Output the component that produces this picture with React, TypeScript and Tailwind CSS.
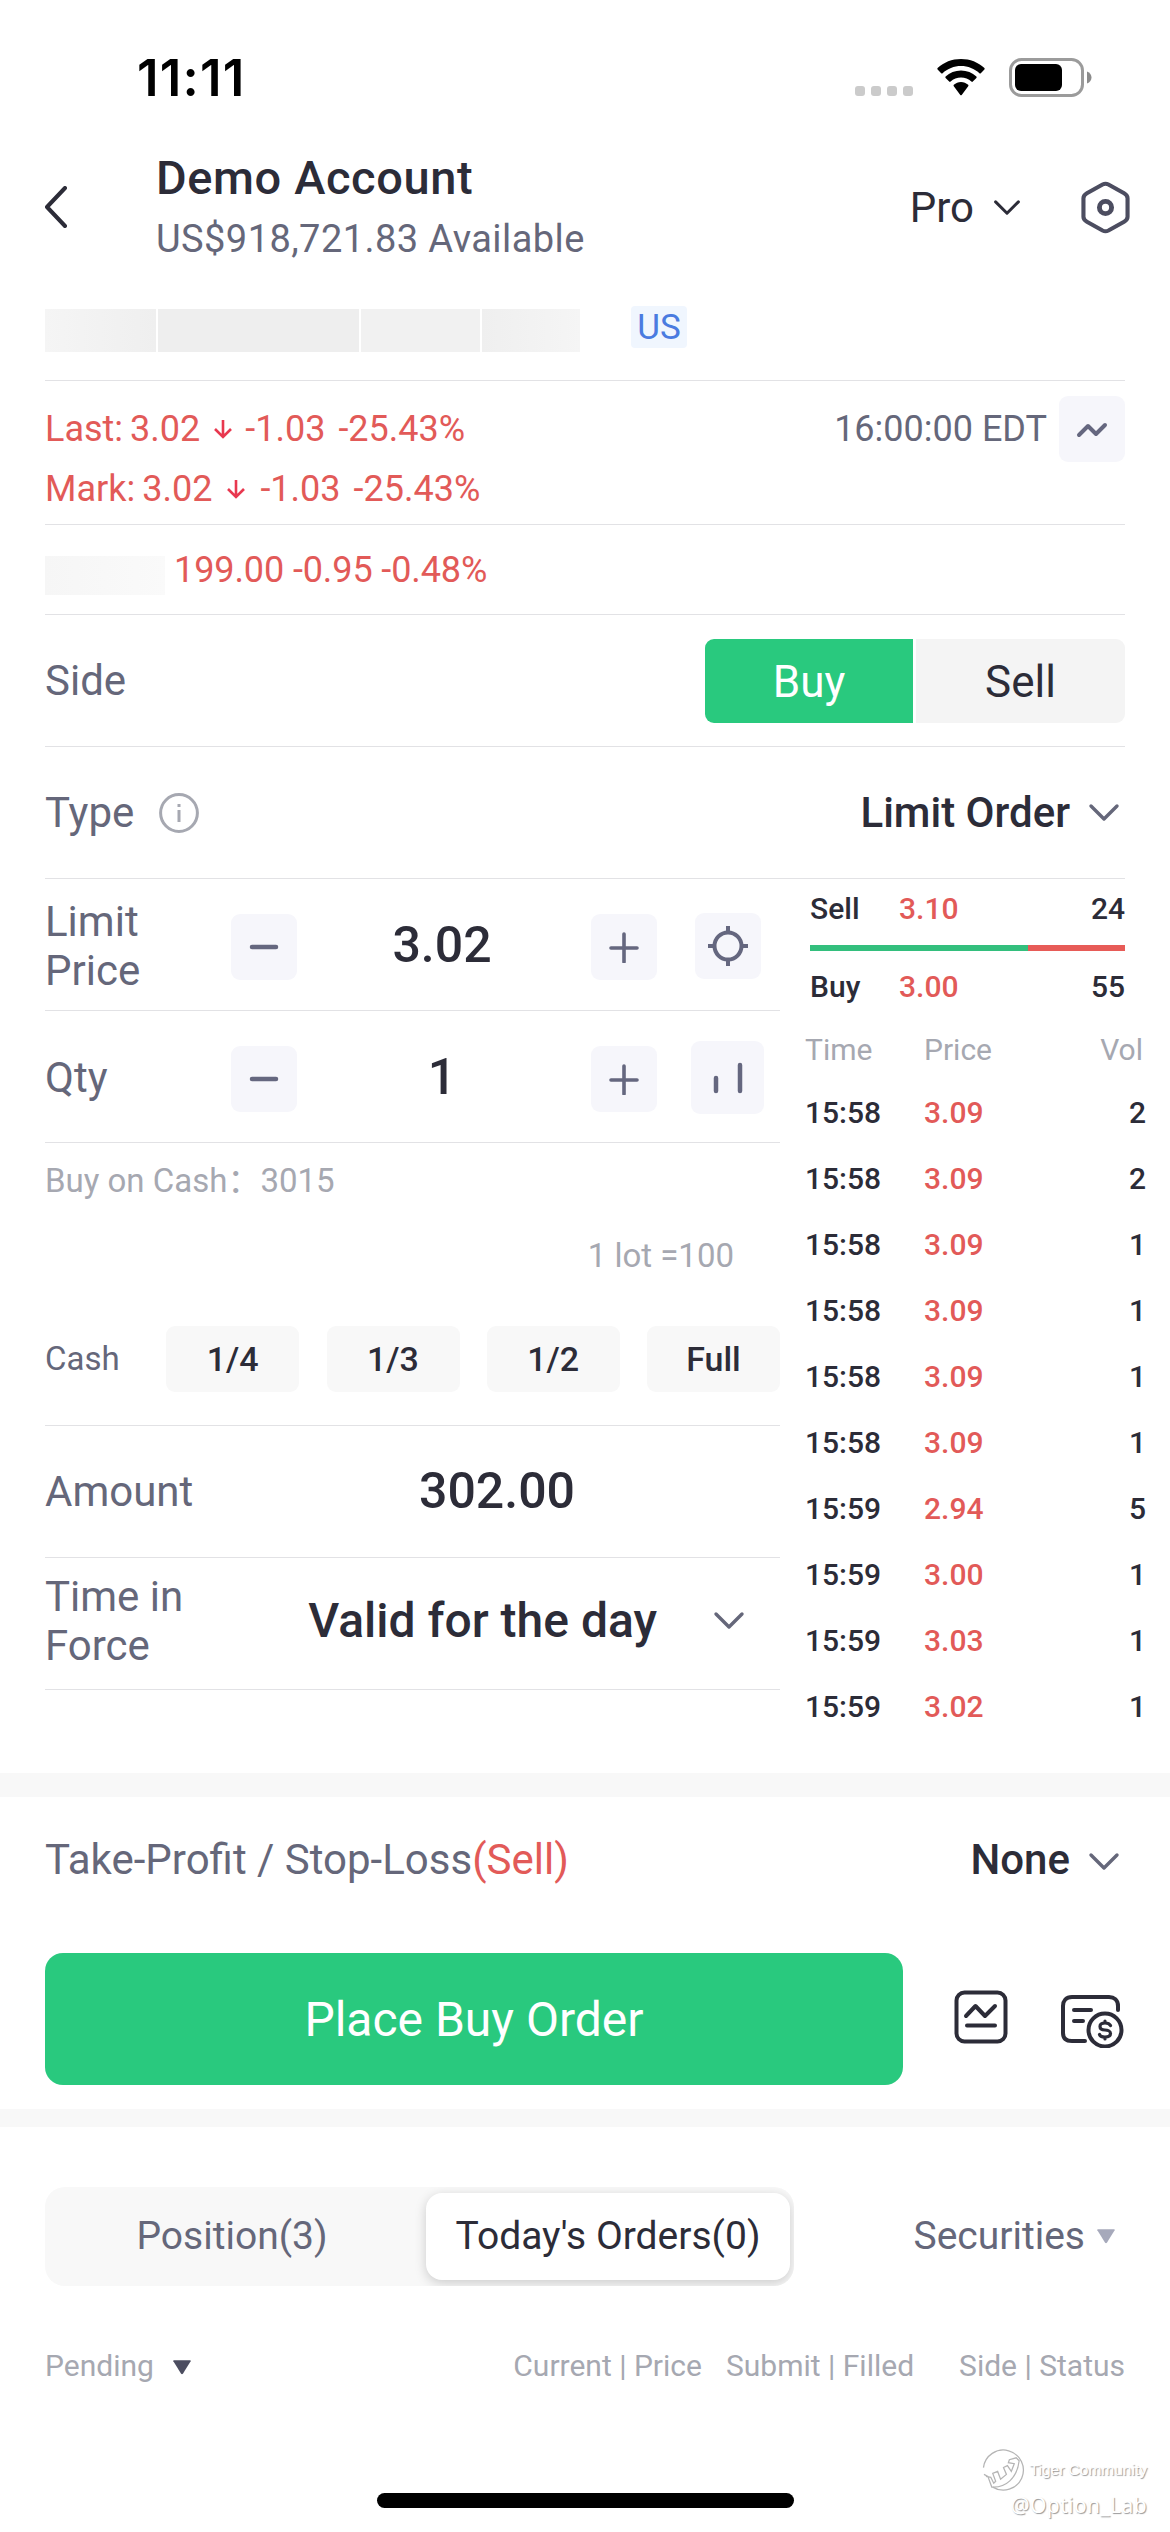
import * as React from 'react'

const TRADES = [
  { time: '15:58', price: '3.09', vol: 2 },
  { time: '15:58', price: '3.09', vol: 2 },
  { time: '15:58', price: '3.09', vol: 1 },
  { time: '15:58', price: '3.09', vol: 1 },
  { time: '15:58', price: '3.09', vol: 1 },
  { time: '15:58', price: '3.09', vol: 1 },
  { time: '15:59', price: '2.94', vol: 5 },
  { time: '15:59', price: '3.00', vol: 1 },
  { time: '15:59', price: '3.03', vol: 1 },
  { time: '15:59', price: '3.02', vol: 1 },
]

const FRACTIONS = ['1/4', '1/3', '1/2', 'Full']

function Chevron({ className = 'w-8' }: { className?: string }) {
  return (
    <svg viewBox="0 0 32 20" className={`h-5 shrink-0 ${className}`} fill="none" stroke="currentColor" strokeWidth="3.4" strokeLinecap="round" strokeLinejoin="round">
      <path d="M3 3l13 13L29 3" />
    </svg>
  )
}

function Triangle({ className = '' }: { className?: string }) {
  return (
    <svg viewBox="0 0 20 16" className={`w-[18px] h-[15px] ${className}`} fill="currentColor">
      <path d="M1 0h18q1 0 .6 1l-8.6 14q-1 1-2 0L.4 1Q0 0 1 0z" />
    </svg>
  )
}

function DownArrow() {
  return (
    <svg viewBox="0 0 20 20" className="w-5 h-5 shrink-0" fill="none" stroke="#e8384f" strokeWidth="2.6">
      <path d="M10 1v17M2 10l8 8 8-8" />
    </svg>
  )
}

function StatusBar() {
  return (
    <div className="h-[156px] pl-[137px] pr-[78px] flex justify-between text-black">
      <div className="mt-[48px] h-[60px] leading-[60px] font-['Inter'] font-semibold text-[51px] tracking-[1.2px]">11:11</div>
      <div className="mt-[56px] flex h-[44px]">
        <div className="flex gap-1.5 mt-[30px] mr-[22px]">
          {[0, 1, 2, 3].map((i) => (
            <span key={i} className="w-[10px] h-[10px] rounded-[3px] bg-[#cbcbcb]" />
          ))}
        </div>
        <svg viewBox="0 0 52 38" className="w-[52px] h-[38px] mt-[2px] mr-[21px]">
          <path d="M26 8c7 0 13.500 2.700 18.400 7.200.4.400 1 .4 1.400 0l3.600-3.600c.4-.4.4-1.100 0-1.500C43.300 4.200 35 1 26 1S8.700 4.200 2.600 10.100c-.4.4-.4 1.100 0 1.500l3.600 3.600c.4.400 1 .4 1.400 0C12.500 10.700 19 8 26 8z" />
          <path d="M26 19.600c3.900 0 7.600 1.500 10.400 4 .4.400 1 .4 1.400 0l3.600-3.600c.4-.4.4-1.100 0-1.500C37.300 14.800 31.900 12.500 26 12.500s-11.300 2.300-15.400 6c-.4.4-.4 1.100 0 1.500l3.600 3.600c.4.400 1 .4 1.400 0 2.800-2.500 6.500-4 10.400-4z" />
          <path d="M33.200 28.300c.4-.4.4-1.100 0-1.500C31.200 25.100 28.700 24 26 24s-5.200 1.100-7.200 2.800c-.4.4-.4 1.100 0 1.500l6.500 8.700c.4.400 1 .4 1.400 0z" />
        </svg>
        <svg viewBox="0 0 84 40" className="w-[84px] h-[40px] mt-[2px]" fill="none">
          <rect x="2.500" y="1.500" width="72" height="36" rx="11" stroke="#9b9b9b" strokeWidth="3" />
          <rect x="7" y="6" width="47" height="27" rx="6" fill="#000" />
          <path d="M79 13.500c3 1 4.500 3.500 4.500 6s-1.500 5-4.500 6z" fill="#8b8b8b" />
        </svg>
      </div>
    </div>
  )
}

function Header() {
  return (
    <div className="h-[120px] pl-[44px] pr-[40px] pb-[18px] flex items-center text-[#2c2c38]">
      <svg viewBox="0 0 24 42" className="w-6 h-[42px]" fill="none" stroke="currentColor" strokeWidth="4" strokeLinecap="round" strokeLinejoin="round">
        <path d="M21 2L3 21l18 19" />
      </svg>
      <div className="ml-[88px] self-start flex-1">
        <h1 className="text-[47px] leading-[54px] mt-[-5px] font-medium tracking-[0.6px]">Demo Account</h1>
        <p className="text-[38px] leading-[46px] mt-[11px] text-[#65677a] tracking-[0.43px]">US$918,721.83 Available</p>
      </div>
      <span className="text-[42px]">Pro</span>
      <Chevron className="ml-[19px] mt-[2px] w-[28px]" />
      <svg viewBox="0 0 50 54" className="ml-[60px] w-[49px] h-[53px] shrink-0" fill="none" stroke="#4c4d60" strokeWidth="4.2">
        <path d="M22 3.500q3-1.500 6 0l16 9q3.500 2 3.500 5v19q0 3-3.500 5l-16 9q-3 1.500-6 0L6 41.500q-3.500-2-3.500-5v-19q0-3 3.500-5z" />
        <circle cx="25" cy="27" r="6.200" strokeWidth="5" />
      </svg>
    </div>
  )
}

function Quote({ label, arrow }: { label: string; arrow: string }) {
  return (
    <div className="flex items-center text-[36px] leading-[60px] text-[#e25a58]">
      <span className="mr-[7px]">{label}</span>
      <span>3.02</span>
      <span className={`flex justify-center ${arrow}`}><DownArrow /></span>
      <span>-1.03</span>
      <span className="ml-[13px]">-25.43%</span>
    </div>
  )
}

function IconButton({ children, className = 'w-[66px] h-[66px]' }: { children: React.ReactNode; className?: string }) {
  return <button className={`shrink-0 rounded-[9px] bg-[#f6f6fb] flex items-center justify-center text-[#65677f] ${className}`}>{children}</button>
}

function Minus() {
  return (
    <svg viewBox="0 0 30 30" className="w-[30px] h-[30px]" stroke="currentColor" strokeWidth="4.500" strokeLinecap="round">
      <path d="M3 15h24" />
    </svg>
  )
}

function Plus() {
  return (
    <svg viewBox="0 0 32 32" className="w-8 h-8" stroke="currentColor" strokeWidth="3.600" strokeLinecap="round">
      <path d="M3 17h26M16 3v28" />
    </svg>
  )
}

function Stepper({ label, value, children }: { label: React.ReactNode; value: string; children: React.ReactNode }) {
  return (
    <div className="h-[132px] pt-[2px] border-b border-[#e2e2e5] flex items-center">
      <div className="w-[186px] text-[42px] leading-[49px] text-[#65677a]">{label}</div>
      <IconButton className="w-[66px] h-[66px] mt-[3px]"><Minus /></IconButton>
      <div className="flex-1 pr-[4px] text-center text-[50px] font-medium text-[#2c2c38]">{value}</div>
      <IconButton className="w-[66px] h-[66px] mt-[3px]"><Plus /></IconButton>
      <div className="w-[73px] ml-[34px] mr-[16px] flex justify-center">{children}</div>
    </div>
  )
}

function OrderForm() {
  return (
    <div className="w-[735px]">
      <Stepper label={<>Limit<br />Price</>} value="3.02">
        <IconButton>
          <svg viewBox="0 0 40 40" className="w-10 h-10" fill="none" stroke="currentColor" strokeWidth="4">
            <circle cx="20" cy="20" r="13.500" />
            <path d="M20 0v7M20 33v7M0 20h7M33 20h7" />
          </svg>
        </IconButton>
      </Stepper>
      <Stepper label="Qty" value="1">
        <IconButton className="w-[73px] h-[73px]">
          <svg viewBox="0 0 32 34" className="w-8 h-[34px]" stroke="currentColor" strokeWidth="4.500" strokeLinecap="round">
            <path d="M4 17v13M28 4v26" />
          </svg>
        </IconButton>
      </Stepper>
      <div className="h-[283px] border-b border-[#e2e2e5] text-[33px] leading-[40px] text-[#a6a8b1]">
        <p className="pt-[15px]">Buy on Cash<span className="font-['Noto_Sans_CJK_SC']">：</span>3015</p>
        <p className="mt-[35px] pr-[46px] text-right">1 lot =100</p>
        <div className="mt-[50px] flex items-center justify-between">
          <span className="w-[94px] text-[#65677a]">Cash</span>
          {FRACTIONS.map((f) => (
            <button key={f} className="w-[133px] h-[66px] rounded-[9px] bg-[#f8f8f8] text-[34px] font-medium text-[#2c2c38]">{f}</button>
          ))}
        </div>
      </div>
      <div className="h-[132px] pb-px border-b border-[#e2e2e5] flex items-center">
        <span className="w-[300px] text-[42px] text-[#65677a]">Amount</span>
        <span className="w-[304px] text-center text-[50px] font-medium text-[#2c2c38]">302.00</span>
      </div>
      <div className="h-[132px] pb-[6px] border-b border-[#e2e2e5] flex items-center">
        <span className="w-[230px] text-[42px] leading-[49px] text-[#65677a]">Time in<br />Force</span>
        <span className="flex-1 text-right text-[48px] font-medium text-[#2c2c38]">Valid for the day</span>
        <Chevron className="w-8 ml-[56px] mr-[35px] text-[#65677a]" />
      </div>
    </div>
  )
}

function Book() {
  return (
    <div className="flex-1 text-[30px] font-medium text-[#2c2c38]">
      <div className="ml-[30px] w-[315px]">
        <div className="flex h-[66px] leading-[60px]">
          <span className="w-[89px]">Sell</span>
          <span className="flex-1 text-[#e25a58]">3.10</span>
          <span>24</span>
        </div>
        <div className="flex h-[6px]">
          <div className="w-[218px] bg-[#33bf7d]" />
          <div className="flex-1 bg-[#e75b57]" />
        </div>
        <div className="flex h-[66px] leading-[71px]">
          <span className="w-[89px]">Buy</span>
          <span className="flex-1 text-[#e25a58]">3.00</span>
          <span>55</span>
        </div>
      </div>
      <div className="ml-[25px] w-[341px]">
        <div className="flex h-[66px] leading-[66px] pr-[3px] font-normal text-[#a6a8b1]">
          <span className="w-[119px]">Time</span>
          <span className="flex-1">Price</span>
          <span>Vol</span>
        </div>
        {TRADES.map((t, i) => (
          <div key={i} className="flex h-[66px] leading-[60px]">
            <span className="w-[119px]">{t.time}</span>
            <span className="flex-1 text-[#e25a58]">{t.price}</span>
            <span>{t.vol}</span>
          </div>
        ))}
      </div>
    </div>
  )
}

function Actions() {
  return (
    <div className="h-[156px] mt-[10px] px-[45px] flex text-[#2c2c38]">
      <button className="w-[858px] h-[132px] pt-px rounded-[18px] bg-[#29c97e] text-[48px] text-white">Place Buy Order</button>
      <svg viewBox="0 0 54 54" className="ml-[51px] mt-[37px] w-[54px] h-[54px]" fill="none" stroke="currentColor" strokeWidth="4" strokeLinecap="round" strokeLinejoin="round">
        <rect x="2.500" y="2.500" width="49" height="49" rx="8" />
        <path d="M12 26l9.500-10L31 26l10-10M13 35.500h28" />
      </svg>
      <svg viewBox="0 0 64 54" className="ml-[52px] mt-[41px] w-[64px] h-[54px]" fill="none" stroke="currentColor" strokeWidth="4" strokeLinecap="round" strokeLinejoin="round">
        <path d="M58 16v-4c0-6-4-9-9-9H12c-6 0-9 4-9 9v27c0 5 3 8 9 8h13M14 16h17M14 27h9" />
        <circle cx="45" cy="36" r="16.500" />
        <path d="M50.500 31.500c-1-2-3-2.500-5.500-2.500s-5 1-5 3.500 2.500 3.500 5 3.500 5.500 1 5.500 3.500-2.500 3.500-5.500 3.500-5-.5-5.500-2.500M45 27v2M45 43v2" strokeWidth="3.200" />
      </svg>
    </div>
  )
}

function Orders() {
  return (
    <div className="px-[45px]">
      <div className="mt-[60px] flex items-center justify-between">
        <div className="w-[749px] h-[99px] p-[6px] pr-[4px] rounded-[20px] bg-[#f8f8f8] flex overflow-hidden text-[39px]">
          <div className="w-[375px] pr-[13px] leading-[86px] text-center text-[#65677a]">Position(3)</div>
          <div className="flex-1 h-[87px] leading-[86px] rounded-[16px] bg-white text-center text-[#2c2c38] shadow-[0_3px_12px_rgba(0,0,0,0.18)]">Today's Orders(0)</div>
        </div>
        <div className="flex items-center gap-[12px] pr-[10px] text-[39px] text-[#65677a]">
          Securities
          <Triangle className="text-[#a6a9bb]" />
        </div>
      </div>
      <div className="mt-[56px] flex items-center text-[30px] leading-[48px] text-[#a6a8b1]">
        <span>Pending</span>
        <Triangle className="ml-[19px] mt-[2px] text-[#4c4d60]" />
        <span className="ml-auto">Current | Price</span>
        <span className="ml-[24px]">Submit | Filled</span>
        <span className="ml-[45px]">Side | Status</span>
      </div>
    </div>
  )
}

function Watermark() {
  return (
    <div className="absolute right-[23px] bottom-[12px] flex flex-col items-end text-white [text-shadow:1px_1px_1px_#999]">
      <div className="flex items-center gap-[5px] font-['Liberation_Sans'] text-[15.500px]">
        <svg viewBox="0 0 44 44" className="w-[43px] h-[43px]" fill="none" stroke="#b5b5b5" strokeWidth="1.300">
          <path d="M1.500 20A20.500 20.500 0 1 1 11 40" />
          <path d="M2 27l4 2 4 11c14 1 26-9 28-27l-3-3-7 2-1 3 6 1-3 8-4-6-4 2 3 7-6 5-3-8-5 2 3 8-2 2-3-6-5-1" />
        </svg>
        Tiger Community
      </div>
      <div className="font-['Noto_Sans'] text-[21px] leading-[29px] tracking-[0.4px]">@Option_Lab</div>
    </div>
  )
}

export default function App() {
  return (
    <div className="relative w-[1170px] h-[2532px] overflow-hidden bg-white font-['Roboto',sans-serif]">
      <StatusBar />
      <Header />
      <div className="px-[45px]">
        <div className="h-[105px] pt-[31px] border-b border-[#e2e2e5] flex">
          <div className="flex gap-0.5 mt-[2px] w-[535px] h-[43px]">
            <div className="w-[111px] bg-linear-to-r from-[#f5f5f5] to-[#efefef]" />
            <div className="w-[201px] bg-[#eeeeee]" />
            <div className="w-[119px] bg-[#f1f1f1]" />
            <div className="w-[98px] bg-linear-to-r from-[#efefef] to-[#f5f5f5]" />
          </div>
          <span className="ml-[51px] mt-[-1px] w-[56px] h-[42px] rounded-[4px] bg-[#f0f6fe] text-center text-[35px] leading-[44px] text-[#4a7be0]">US</span>
        </div>
        <div className="h-[144px] border-b border-[#e2e2e5] flex justify-between">
          <div className="pt-[18px]">
            <Quote label="Last:" arrow="w-[45px]" />
            <Quote label="Mark:" arrow="w-[48px]" />
          </div>
          <div className="flex mt-[15px]">
            <span className="mr-[12px] text-[36px] leading-[66px] text-[#65677a]">16:00:00 EDT</span>
            <IconButton>
              <svg viewBox="0 0 32 18" className="mt-[2px] w-8 h-[18px]" fill="none" stroke="currentColor" strokeWidth="4" strokeLinecap="round" strokeLinejoin="round">
                <path d="M3 14l9-9 8 8 9-9" />
              </svg>
            </IconButton>
          </div>
        </div>
        <div className="h-[90px] border-b border-[#e2e2e5] flex">
          <div className="mt-[31px] w-[120px] h-[39px] bg-linear-to-r from-[#f6f6f6] to-[#fafafa]" />
          <span className="ml-[9px] text-[36px] leading-[91px] tracking-[-0.1px] text-[#e25a58]">199.00 -0.95 -0.48%</span>
        </div>
        <div className="h-[132px] border-b border-[#e2e2e5] flex items-center justify-between">
          <span className="text-[42px] text-[#65677a]">Side</span>
          <div className="flex gap-[3px] text-[44px] leading-[84px] text-center">
            <button className="w-[208px] h-[84px] pt-px rounded-l-[9px] bg-[#29c97e] text-white">Buy</button>
            <button className="w-[209px] h-[84px] pt-px rounded-r-[9px] bg-[#f4f4f4] text-[#2c2c38]">Sell</button>
          </div>
        </div>
        <div className="h-[132px] border-b border-[#e2e2e5] flex items-center">
          <span className="text-[42px] text-[#65677a]">Type</span>
          <svg viewBox="0 0 40 40" className="ml-[25px] w-10 h-10" fill="none" stroke="#a6a8b1" strokeWidth="3">
            <circle cx="20" cy="20" r="18.400" />
            <path d="M20 17v12M20 11v3" />
          </svg>
          <span className="ml-auto text-[42px] font-medium text-[#2c2c38]">Limit Order</span>
          <Chevron className="w-8 ml-[18px] mr-[5px] text-[#65677a]" />
        </div>
      </div>
      <div className="flex pl-[45px] h-[894px]">
        <OrderForm />
        <Book />
      </div>
      <div className="h-6 bg-[#f8f8f8]" />
      <div className="h-[146px] pt-[3px] px-[45px] flex items-start text-[42px] leading-[120px]">
        <span className="text-[#65677a]">Take-Profit / Stop-Loss<span className="text-[#e25a58]">(Sell)</span></span>
        <span className="ml-auto font-medium text-[#2c2c38]">None</span>
        <Chevron className="w-8 mt-[52px] ml-[18px] mr-[5px] text-[#65677a]" />
      </div>
      <Actions />
      <div className="h-[18px] bg-[#f8f8f8]" />
      <Orders />
      <div className="absolute left-[377px] bottom-[24px] w-[417px] h-[15px] rounded-full bg-black" />
      <Watermark />
    </div>
  )
}
